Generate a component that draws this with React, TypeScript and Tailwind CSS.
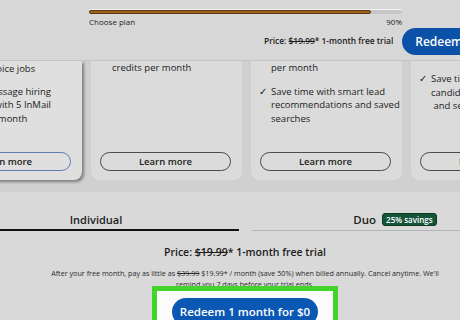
function Tick() {
  return <span className="absolute left-[-12px] top-0 text-[10px] text-[#222]">✓</span>;
}

function LearnMore({ selected }: { selected?: boolean }) {
  return (
    <button
      className={
        "ml-[9px] h-[19px] w-[131px] rounded-full border-[1.5px] text-[9.5px] font-semibold text-[#222] " +
        (selected ? "border-[#5d7eae]" : "border-[#4a4a4a]")
      }
    >
      Learn more
    </button>
  );
}

export default function App() {
  return (
    <div
      className="relative flex h-[320px] w-[460px] flex-col overflow-hidden bg-[#d8d8d8] text-[#1c1c1c]"
      style={{ fontFamily: "'Open Sans', 'Liberation Sans', sans-serif" }}
    >
      {/* sticky header */}
      <div className="relative z-10 h-[61px] shrink-0 border-b border-[#c4c4c4] bg-[#d7d7d7]">
        <div className="ml-[89px] w-[313px] pt-[10px]">
          <div className="h-[4px] w-full rounded-full bg-[#c6c6c6] shadow-[0_-1px_0_#f4f4f4]">
            <div className="h-full w-[282px] rounded-full border border-[#5a3815] bg-[#a0621f]" />
          </div>
          <div className="mt-[3px] flex justify-between text-[8px] leading-[10px] text-[#222]">
            <span>Choose plan</span>
            <span>90%</span>
          </div>
        </div>
        <div className="ml-[264px] mt-[1px] flex items-center whitespace-nowrap">
          <span className="text-[8.4px] font-semibold">
            Price: <span className="line-through">$19.99</span>* 1-month free trial
          </span>
          <button className="ml-[9px] h-[27px] w-[90px] shrink-0 rounded-full bg-[#0b51a8] pl-[13px] text-left text-[12px] font-semibold text-white">
            Redeem
          </button>
        </div>
      </div>

      {/* plan cards (scrolled, tops hidden behind header) */}
      <div className="shrink-0 bg-[#d0d0d0] pb-[12px]">
        <div className="-ml-[69px] flex gap-[9px] text-[9.5px] leading-[13.5px]">
          <div className="flex h-[119px] w-[151px] shrink-0 flex-col justify-between rounded-b-[8px] bg-[#dfdfdf] pb-[9px] shadow-[2px_2px_3px_rgba(0,0,0,0.4)]">
            <div className="whitespace-nowrap pl-[17px] pt-[1px]">
              <div>for your choice jobs</div>
              <div className="relative mt-[9px]">
                <Tick />
                <div>Directly message hiring</div>
                <div>managers with 5 InMail</div>
                <div>credits per month</div>
              </div>
            </div>
            <LearnMore selected />
          </div>

          <div className="flex h-[119px] w-[151px] shrink-0 flex-col justify-between rounded-b-[8px] bg-[#dbdbdb] pb-[9px]">
            <div className="pl-[21px]">credits per month</div>
            <LearnMore />
          </div>

          <div className="flex h-[119px] w-[151px] shrink-0 flex-col justify-between rounded-b-[8px] bg-[#dbdbdb] pb-[9px]">
            <div className="whitespace-nowrap pl-[20px]">
              <div>per month</div>
              <div className="relative mt-[10px]">
                <Tick />
                <div>Save time with smart lead</div>
                <div>recommendations and saved</div>
                <div>searches</div>
              </div>
            </div>
            <LearnMore />
          </div>

          <div className="flex h-[119px] w-[151px] shrink-0 flex-col justify-between rounded-b-[8px] bg-[#dbdbdb] pb-[9px]">
            <div className="relative ml-[20px] mt-[11px] whitespace-nowrap">
              <Tick />
              <div>Save time with smart</div>
              <div>candidate recommendations</div>
              <div>&nbsp;and searches</div>
            </div>
            <LearnMore />
          </div>
        </div>
      </div>

      {/* plan type tabs + offer */}
      <div className="flex flex-1 flex-col bg-[#d9d9d9]">
        <div className="-ml-[47px] mt-[12px] flex gap-[13px]">
          <div className="flex h-[27px] w-[286px] shrink-0 items-end justify-center border-b-2 border-[#111] pb-[2px] text-[11px] font-semibold leading-[14px]">
            Individual
          </div>
          <div className="flex h-[27px] w-[286px] shrink-0 items-end justify-center gap-[6px] border-b border-[#b4b4b4] pb-[3px] text-[11.5px] font-semibold leading-[14px]">
            <span>Duo</span>
            <span className="mb-[1px] rounded-[3px] border border-[#0c3a22] bg-[#14553a] px-[3px] text-[8px] font-semibold leading-[11px] text-white">
              25% savings
            </span>
          </div>
        </div>

        <div className="flex flex-col items-center pl-[30px]">
          <div className="mt-[14px] text-[10.5px] font-semibold leading-[14px]">
            Price: <span className="line-through">$19.99</span>* 1-month free trial
          </div>
          <div className="mt-[9px] w-[408px] text-center text-[7.2px] leading-[11px] text-[#2a2a2a]">
            After your free month, pay as little as <span className="line-through">$39.99</span> $19.99* / month (save 50%) when billed annually. Cancel anytime. We'll remind you 7 days before your trial ends.
          </div>
          <div className="relative -mt-[4px] w-[186px] shrink-0 border-[5px] border-[#42d42b] bg-[#fbfbfb] px-[15px] pb-[6px] pt-[7px]">
            <button className="h-[28px] w-full rounded-full bg-[#0b57b4] text-[11.5px] font-semibold text-white">
              Redeem 1 month for $0
            </button>
          </div>
        </div>
      </div>
    </div>
  );
}
